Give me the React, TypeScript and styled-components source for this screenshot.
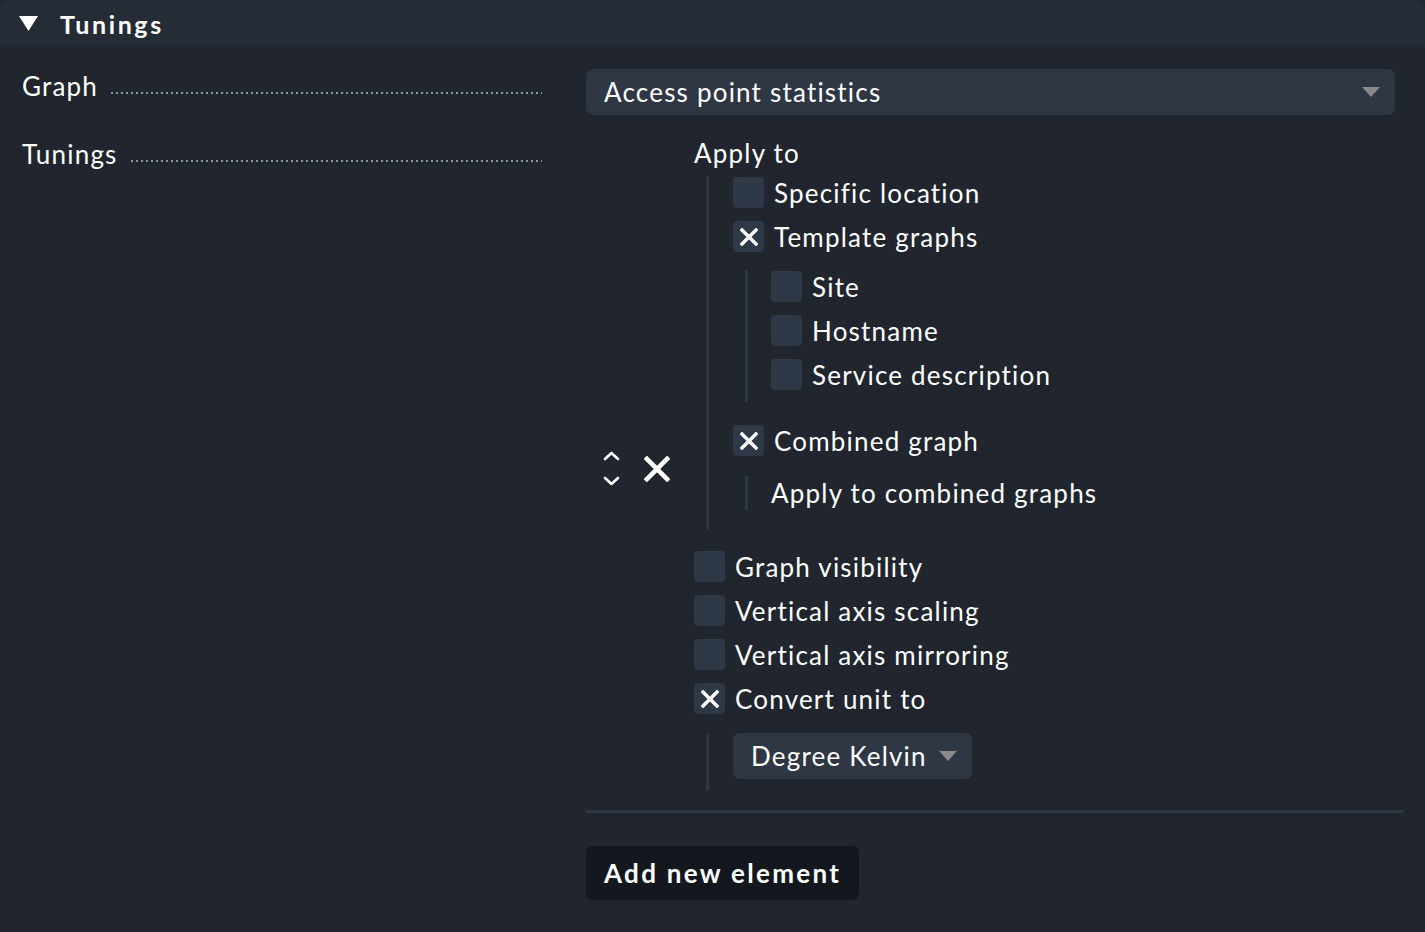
import React from "react";
import styled, { createGlobalStyle } from "styled-components";

const Global = createGlobalStyle`
  html, body { margin: 0; padding: 0; background: #21262e; }
  body {
    font-family: Lato, "Open Sans", sans-serif;
    color: #ffffff;
    font-variant-ligatures: none;
    letter-spacing: 1.2px;
  }
`;

const Page = styled.div`
  width: 1425px;
  height: 932px;
  background: #21262e;
  overflow: hidden;
`;

const Header = styled.div`
  height: 46px;
  background: #262c36;
  border-radius: 8px 8px 0 0;
  display: flex;
  align-items: center;
  padding-left: 19px;
  gap: 22px;
`;

const HeaderTitle = styled.span`
  font-size: 25px;
  font-weight: 700;
  letter-spacing: 2.6px;
  line-height: 1;
  padding-top: 3px;
`;

const Form = styled.div`
  display: grid;
  grid-template-columns: 586px 809px;
  padding-top: 23px;
`;

const LabelCell = styled.div<{ $top: number }>`
  display: flex;
  align-items: baseline;
  padding: ${(p) => p.$top}px 44px 0 22px;
  font-size: 26px;
  line-height: 34px;
`;

const Dots = styled.span`
  flex: 1;
  margin-left: 13px;
  height: 2px;
  background-image: linear-gradient(to right, #8a96a6 0, #8a96a6 2px, transparent 2px);
  background-size: 5px 2px;
  background-repeat: repeat-x;
  transform: translateY(-2px);
`;

const Select = styled.div<{ $wide?: boolean }>`
  display: flex;
  align-items: center;
  align-self: flex-start;
  height: 46px;
  width: ${(p) => (p.$wide ? "809px" : "auto")};
  padding: 0 15px 0 18px;
  box-sizing: border-box;
  background: #2f3744;
  border-radius: 7px;
  font-size: 26px;
  gap: 12px;
`;

const SelectText = styled.span`
  flex: 1;
  white-space: nowrap;
`;

const Caret = () => (
  <svg width="18" height="10" viewBox="0 0 18 10">
    <polygon points="0,0 18,0 9,10" fill="#8a8a8a" />
  </svg>
);

const HeaderTriangle = () => (
  <svg width="19" height="15" viewBox="0 0 19 15">
    <polygon points="0,0 19,0 9.5,15" fill="#ffffff" />
  </svg>
);

const ValueCell = styled.div`
  display: flex;
  flex-direction: column;
`;

const Entry = styled.div`
  display: flex;
  align-items: center;
  margin-top: 21px;
`;

const Controls = styled.div`
  width: 108px;
  display: flex;
  align-items: center;
  gap: 24px;
  padding-left: 17px;
  box-sizing: border-box;
  margin-top: 11px;
`;

const EntryBody = styled.div`
  display: flex;
  flex-direction: column;
`;

const Text = styled.div`
  font-size: 26px;
  line-height: 34px;
  white-space: nowrap;
`;

const Nest = styled.div<{ $indent: number; $top: number; $bottom?: number }>`
  margin-left: ${(p) => p.$indent}px;
  margin-top: ${(p) => p.$top}px;
  margin-bottom: ${(p) => p.$bottom ?? 0}px;
  border-left: 3px solid #2f3744;
  padding-left: 24px;
  display: flex;
  flex-direction: column;
`;

const SubNest = styled(Nest)`
  padding-left: 23px;
`;

const Row = styled.div<{ $top?: number }>`
  display: flex;
  align-items: center;
  gap: 10px;
  height: 31px;
  margin-top: ${(p) => p.$top ?? 13}px;
  font-size: 26px;
  white-space: nowrap;
`;

const Box = styled.div`
  width: 31px;
  height: 31px;
  border-radius: 4px;
  background: #2f3846;
  display: flex;
  align-items: center;
  justify-content: center;
  flex: none;
`;

const Spacer = styled.div<{ $h: number }>`
  height: ${(p) => p.$h}px;
`;

const Cross = ({ size = 18, w = 3.4 }: { size?: number; w?: number }) => (
  <svg width={size} height={size} viewBox="0 0 18 18">
    <path d="M2 2 L16 16 M16 2 L2 16" stroke="#ffffff" strokeWidth={w} strokeLinecap="square" fill="none" />
  </svg>
);

const Check = ({ checked, label, top }: { checked?: boolean; label: string; top?: number }) => (
  <Row $top={top}>
    <Box>{checked && <Cross size={18} w={3.4} />}</Box>
    <span>{label}</span>
  </Row>
);

const UpDown = () => (
  <svg width="17" height="36" viewBox="0 0 17 36">
    <path d="M2 8 L8.5 2 L15 8" stroke="#fff" strokeWidth="2.6" fill="none" strokeLinecap="round" strokeLinejoin="round" />
    <path d="M2 27 L8.5 33 L15 27" stroke="#fff" strokeWidth="2.6" fill="none" strokeLinecap="round" strokeLinejoin="round" />
  </svg>
);

const Separator = styled.div`
  height: 3px;
  width: 818px;
  background: #2f3744;
  margin-top: 20px;
`;

const Button = styled.button`
  margin-top: 33px;
  align-self: flex-start;
  height: 54px;
  padding: 0 18px;
  background: #13181e;
  color: #fff;
  border: none;
  border-radius: 7px;
  font-family: Lato, "Open Sans", sans-serif;
  font-size: 26px;
  font-weight: 700;
  letter-spacing: 2.3px;
`;

export default function App() {
  return (
    <Page>
      <Global />
      <Header>
        <HeaderTriangle />
        <HeaderTitle>Tunings</HeaderTitle>
      </Header>
      <Form>
        <LabelCell $top={0}>
          <span>Graph</span>
          <Dots />
        </LabelCell>
        <ValueCell>
          <Select $wide>
            <SelectText>Access point statistics</SelectText>
            <Caret />
          </Select>
        </ValueCell>
        <LabelCell $top={22}>
          <span>Tunings</span>
          <Dots />
        </LabelCell>
        <ValueCell>
          <Entry>
            <Controls>
              <UpDown />
              <Cross size={26} w={3.2} />
            </Controls>
            <EntryBody>
              <Text>Apply to</Text>
              <Nest $indent={12} $top={6}>
                <Check label="Specific location" top={1} />
                <Check label="Template graphs" checked />
                <SubNest $indent={12} $top={18}>
                  <Check label="Site" top={1} />
                  <Check label="Hostname" />
                  <Check label="Service description" />
                  <Spacer $h={12} />
                </SubNest>
                <Check label="Combined graph" checked top={23} />
                <SubNest $indent={12} $top={20} $bottom={20}>
                  <Text>Apply to combined graphs</Text>
                </SubNest>
              </Nest>
              <Check label="Graph visibility" top={21} />
              <Check label="Vertical axis scaling" />
              <Check label="Vertical axis mirroring" />
              <Check label="Convert unit to" checked />
              <Nest $indent={12} $top={19}>
                <Select>
                  <SelectText>Degree Kelvin</SelectText>
                  <Caret />
                </Select>
                <Spacer $h={11} />
              </Nest>
            </EntryBody>
          </Entry>
          <Separator />
          <Button>Add new element</Button>
        </ValueCell>
      </Form>
    </Page>
  );
}
